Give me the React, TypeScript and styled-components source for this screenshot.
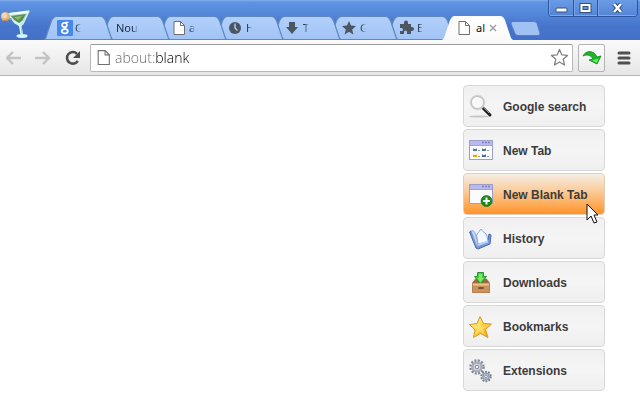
import React, { useState } from 'react';
import styled, { createGlobalStyle, css } from 'styled-components';

const GlobalStyle = createGlobalStyle`
  * { box-sizing: border-box; }
  body { margin: 0; background: #fff; font-family: "Liberation Sans", Arial, sans-serif; }
  button { font: inherit; border: 0; padding: 0; background: none; color: inherit; }
  svg { display: block; flex: none; }
`;

const Browser = styled.div`
  min-height: 100vh;
  display: flex;
  flex-direction: column;
`;

const TitleBar = styled.header`
  display: flex;
  align-items: flex-end;
  height: 40px;
  background: linear-gradient(#86b0ee 0, #5f93e2 2px, #578bdc 10px, #4775cc 26px, #4371c8 100%);
`;

const Logo = styled.div`
  flex: none;
  width: 43px;
  height: 30px;
`;

const TabStrip = styled.div`
  display: flex;
  align-items: flex-end;
  min-width: 0;
`;

const tabShape = css`
  clip-path: polygon(0 100%, 2px 22px, 8px 4px, 10px 1px, 12px 0, calc(100% - 12px) 0, calc(100% - 10px) 1px, calc(100% - 8px) 4px, calc(100% - 2px) 22px, 100% 100%);
`;

const TabButton = styled.button<{ $active?: boolean; $order: number }>`
  position: relative;
  z-index: ${p => p.$order};
  isolation: isolate;
  display: flex;
  align-items: center;
  gap: 2px;
  flex: 0 1 71px;
  width: 71px;
  height: 24px;
  padding: 0 ${p => (p.$active ? 16 : 32)}px 0 14px;
  background: ${p => (p.$active ? '#fafafa' : '#6088c0')};
  color: ${p => (p.$active ? '#111' : '#1c2c42')};
  font-family: "Noto Sans", "Open Sans", sans-serif;
  font-size: 11px;
  line-height: 16px;
  text-align: left;
  ${tabShape}
  & + & { margin-left: -14px; }
  &::before {
    content: "";
    position: absolute;
    z-index: -1;
    inset: 1px 1px ${p => (p.$active ? 0 : 1)}px;
    background: ${p => (p.$active ? 'linear-gradient(#fff, #fafafa)' : 'linear-gradient(#b1cffb, #a2c4f5)')};
    ${tabShape}
  }
`;

const TabLabel = styled.span<{ $inset?: boolean }>`
  flex: 1 1 0;
  min-width: 0;
  padding-left: ${p => (p.$inset ? 2 : 0)}px;
  overflow: hidden;
  white-space: nowrap;
  mask-image: linear-gradient(to left, transparent 1px, #000 6px);
`;

const ActiveLabel = styled(TabLabel)`
  mask-image: none;
`;

const NewTabButton = styled.button`
  flex: none;
  width: 31px;
  height: 15px;
  margin: 0 0 4px -3px;
`;

const WindowControls = styled.div`
  display: flex;
  align-self: flex-start;
  flex: none;
  height: 17px;
  margin: 0 2px 0 auto;
  border: 1px solid #2e56a0;
  border-top: 0;
  border-radius: 0 0 4px 4px;
  overflow: hidden;
`;

const WindowButton = styled.button<{ $wide?: boolean }>`
  display: grid;
  place-items: center;
  width: ${p => (p.$wide ? 40 : 24)}px;
  height: 16px;
  background: linear-gradient(#6a9be5, #5385d5);
  box-shadow: inset 0 -1px #80a8e8, inset 1px 0 #79a3e6;
  & + & { border-left: 1px solid #2e56a0; }
`;

const Toolbar = styled.div`
  display: flex;
  align-items: center;
  height: 36px;
  padding: 0 4px 0 0;
  background: linear-gradient(#fafafa, #e6e6e6);
  border-bottom: 1px solid #b5b5b5;
`;

const ToolButton = styled.button`
  display: grid;
  place-items: center;
  flex: none;
  width: 29px;
  height: 28px;
`;

const MenuButton = styled(ToolButton)`
  margin-left: 7px;
  width: 24px;
`;

const AddressBar = styled.form`
  display: flex;
  align-items: center;
  flex: 1 1 auto;
  min-width: 0;
  height: 28px;
  margin: 0 5px 0 3px;
  padding: 0 3px 0 4px;
  gap: 3px;
  background: #fff;
  border: 1px solid #b8b8b8;
  border-top-color: #999;
  border-radius: 2px;
`;

const AddressInput = styled.input`
  flex: 1 1 auto;
  min-width: 0;
  height: 24px;
  padding: 0;
  border: 0;
  outline: 0;
  font-family: "Open Sans", "Noto Sans", sans-serif;
  font-size: 14px;
  font-weight: 300;
  color: transparent;
  caret-color: #000;
  background: linear-gradient(to right, #666 40px, #000 40px);
  background-clip: text;
`;

const ExtensionButton = styled(ToolButton)`
  width: 27px;
  background: linear-gradient(#fdfdfd, #ececec);
  border: 1px solid #b4b4b4;
  border-radius: 2px;
`;

const Page = styled.main`
  display: flex;
  justify-content: flex-end;
  flex: 1;
  padding: 9px 35px 8px;
`;

const Shortcuts = styled.nav`
  display: flex;
  flex-direction: column;
  gap: 2px;
  width: 142px;
`;

const Shortcut = styled.a<{ $hot?: boolean }>`
  position: relative;
  display: flex;
  align-items: center;
  gap: 9px;
  height: 42px;
  padding: 2px 5px 0 4px;
  border: 1px solid ${p => (p.$hot ? '#e2ceb8' : '#d8d8d8')};
  border-radius: 4px;
  background: ${p => (p.$hot ? 'linear-gradient(#f6eee6, #fbc58c 50%, #ff9428)' : 'linear-gradient(#f0f0f0, #f5f5f5 50%, #efefef)')};
  color: #3c3c3c;
  font-size: 12px;
  font-weight: bold;
  line-height: 16px;
  text-decoration: none;
  white-space: nowrap;
`;

const Pointer = styled.svg`
  position: absolute;
  right: 5px;
  top: 29px;
  z-index: 2;
  pointer-events: none;
`;

const MartiniIcon = () => (
  <svg width="32" height="30" viewBox="0 0 32 30" aria-hidden="true">
    <path d="M8 4 29 1 23 14 20 16 15 13Z" fill="#b9ddd4" stroke="#c9f1f0" strokeWidth="1.400" strokeLinejoin="round" />
    <path d="M11 6 26 4 21 13 17 13Z" fill="#55935a" />
    <path d="M14 7 22 6 18 10Z" fill="#93bd5f" />
    <path d="M9 4 28 2" stroke="#f3fffc" strokeWidth="2" />
    <path d="M14 11 19 14 23 11" stroke="#d8f6f0" strokeWidth="1.500" fill="none" />
    <path d="M20 15 22 25" stroke="#d8f9fb" strokeWidth="2.600" />
    <path d="M21 17 22.500 25" stroke="#7fbcc9" strokeWidth=".8" />
    <ellipse cx="22" cy="26" rx="5.500" ry="1.900" fill="#d3f8f6" />
    <circle cx="5.500" cy="6.500" r="4.600" fill="#e0b585" />
    <circle cx="4.500" cy="5.500" r="2.800" fill="#f3d6af" />
    <path d="M2 11 12 9" stroke="#b98752" />
  </svg>
);

const GoogleIcon = () => (
  <svg width="16" height="16" viewBox="0 0 16 16" aria-hidden="true">
    <rect width="16" height="16" rx="1" fill="#4688ee" />
    <g fill="none" stroke="#fff">
      <ellipse cx="7.500" cy="5" rx="2.400" ry="2.200" strokeWidth="1.700" />
      <path d="M8 2.300h3.500" strokeWidth="1.200" />
      <path d="M9 7.200Q7.500 8.300 9 9.200" strokeWidth="1.500" />
      <ellipse cx="7.800" cy="11.300" rx="3" ry="2.100" strokeWidth="1.700" />
    </g>
  </svg>
);

const PageIcon = ({ size = 16 }: { size?: number }) => (
  <svg width={size} height={size} viewBox="0 0 16 16" aria-hidden="true">
    <path d="M3 1.500h6.500l4 4v9H3Z" fill="#fff" stroke="#6f6f6f" />
    <path d="M9.500 1.500v4h4" fill="none" stroke="#6f6f6f" />
  </svg>
);

const ClockIcon = () => (
  <svg width="16" height="16" viewBox="0 0 16 16" aria-hidden="true">
    <circle cx="7" cy="8" r="6" fill="#4b5661" />
    <path d="M7 3.500V8l2.500 2.500" fill="none" stroke="#b4cff6" strokeWidth="1.400" />
  </svg>
);

const ArrowIcon = () => (
  <svg width="16" height="16" viewBox="0 0 16 16" aria-hidden="true">
    <path d="M4 2h6v5h3l-6 7-6-7h3Z" fill="#4b5661" />
  </svg>
);

const StarIcon = () => (
  <svg width="16" height="16" viewBox="0 0 16 16" aria-hidden="true">
    <path d="m7 1 2 4.600 5 .5-3.800 3.300 1.200 5L7 11.800l-4.400 2.600 1.200-5L0 6.100l5-.5Z" fill="#4b5661" />
  </svg>
);

const PuzzleIcon = () => (
  <svg width="16" height="16" viewBox="0 0 16 16" aria-hidden="true">
    <path d="M1 4h4V2.500a2 2 0 0 1 4 0V4h3v3h1a2 2 0 0 1 0 4h-1v3H8v-2a1.500 1.500 0 0 0-3 0v2H1v-3h1.500a1.500 1.500 0 0 0 0-3H1Z" fill="#4b5661" />
  </svg>
);

const SearchIcon = () => (
  <svg width="26" height="26" viewBox="0 0 26 26" aria-hidden="true">
    <ellipse cx="11" cy="22.500" rx="10" ry="1" fill="#c6c6c6" />
    <path d="m15 14 7 7" stroke="#222" strokeWidth="3" strokeLinecap="round" />
    <path d="m15.500 13.500 5.500 5.500" stroke="#929292" strokeWidth="1" />
    <circle cx="9.500" cy="8.500" r="6.500" fill="#f6f8fa" stroke="#c6c6c6" strokeWidth="2" />
    <path d="M5.500 8a4 4 0 0 1 4-4" stroke="#fff" strokeWidth="2" fill="none" />
    <circle cx="9.500" cy="8.500" r="7.500" fill="none" stroke="#ddd" strokeWidth=".6" />
  </svg>
);

const WindowIcon = ({ blank }: { blank?: boolean }) => (
  <svg width="26" height="26" viewBox="0 0 26 26" aria-hidden="true">
    <rect x="1.500" y="2.500" width="23" height="19" fill="#fbfbff" stroke="#9aa0c8" />
    <path d="M2 3h22v4H2Z" fill="#bab9ee" />
    <path d="M2 7.500h22" stroke="#a2a0d4" />
    <path d="M14 4.500h9" stroke="#7f80bc" strokeWidth="1.500" strokeDasharray="2 1" />
    {blank ? (
      <>
        <circle cx="18.500" cy="19" r="5.500" fill="#168d16" stroke="#086b08" strokeWidth=".6" />
        <path d="M18.500 15.500v7M15 19h7" stroke="#fff" strokeWidth="2" />
      </>
    ) : (
      <>
        <path d="M5 10l1 1h2l1-1v3H5Z" fill="#5477a3" />
        <path d="M14 10l1 1h2l1-1v3h-4Z" fill="#487a76" />
        <path d="M5 16l1 1h2l1-1v3H5Z" fill="#e0ad00" />
        <path d="M14 16l1 1h2l1-1v3h-4Z" fill="#466ca6" />
        <path d="M10 12.500h2m7 0h2M10 18.500h2m7 0h2" stroke="#93a080" />
      </>
    )}
  </svg>
);

const HistoryIcon = () => (
  <svg width="26" height="26" viewBox="0 0 26 26" aria-hidden="true">
    <path d="M1.500 6 3 5l6 13 11-4 1-6 2 1-1 9-12 5-2-1Z" fill="#7597d6" stroke="#4869b0" strokeLinejoin="round" />
    <path d="M3 5c3-1 4 1 5 5l2 9-1 2Z" fill="#c3d6f5" stroke="#7b98d0" strokeWidth=".8" />
    <path d="M10 18 8.500 9 13 3c2 4 5 3 6 7l1 6Z" fill="#f4f8ff" stroke="#8ba8dc" />
    <path d="m10 19 10-3.500" stroke="#bad0f5" strokeWidth="2" />
  </svg>
);

const DownloadsIcon = () => (
  <svg width="26" height="26" viewBox="0 0 26 26" aria-hidden="true">
    <path d="m4.500 13 3-4h11l3 4Z" fill="#9b6539" stroke="#a77849" />
    <path d="M9.500 2.500h6v4h3l-6 7.500-6-7.500h3Z" fill="#4bc841" stroke="#239a31" />
    <path d="M11 4h3v4h2l-3.500 4L9 8h2Z" fill="#7bea69" />
    <path d="M4.500 13.500h17v9h-17Z" fill="#ca935d" stroke="#b67e4b" />
    <path d="M5 14.500h16" stroke="#efc18e" strokeWidth="2" />
    <rect x="10" y="17" width="6" height="2" rx="1" fill="#805030" />
  </svg>
);

const BookmarksIcon = () => (
  <svg width="26" height="26" viewBox="0 0 26 26" aria-hidden="true">
    <defs>
      <linearGradient id="gold" x1="0" y1="0" x2="1" y2="1">
        <stop stopColor="#fff6a8" />
        <stop offset=".5" stopColor="#ffd23c" />
        <stop offset="1" stopColor="#f59300" />
      </linearGradient>
    </defs>
    <path d="m12 2.500 3.500 7 8 .5-6 5.500 2.500 8-7.500-4-7 4L7 16 1.500 10.500l7.500-1Z" fill="url(#gold)" stroke="#dc9b28" strokeLinejoin="round" />
    <path d="m12 5 1 8 8-2-6.500 4.500 3 6-5-4.500L7 20l2.500-5L4 11l6 1Z" fill="#fff09a" opacity=".5" />
  </svg>
);

const ExtensionsIcon = () => (
  <svg width="26" height="26" viewBox="0 0 26 26" aria-hidden="true">
    <circle cx="9" cy="9" r="6.500" fill="none" stroke="#828897" strokeWidth="2.500" strokeDasharray="2 1.400" />
    <circle cx="9" cy="9" r="4.500" fill="#d8dbe6" stroke="#a8adbe" strokeWidth="2.500" />
    <circle cx="9" cy="9" r="1.800" fill="#f4f4f7" stroke="#7c8292" />
    <circle cx="18" cy="18.500" r="4.600" fill="none" stroke="#747b8c" strokeWidth="2.200" strokeDasharray="1.700 1.200" />
    <circle cx="18" cy="18.500" r="3.200" fill="#d0d4e1" stroke="#9ba1b4" strokeWidth="1.800" />
    <circle cx="18" cy="18.500" r="1.300" fill="#f4f4f7" stroke="#747b8c" strokeWidth=".8" />
  </svg>
);

const NavArrow = ({ forward }: { forward?: boolean }) => (
  <svg width="17" height="14" viewBox="0 0 17 14" aria-hidden="true">
    <path d={forward ? 'M0 7h14M8 1l6 6-6 6' : 'M15 7H1M7 1 1 7l6 6'} fill="none" stroke="#c3c3c3" strokeWidth="2.400" />
  </svg>
);

const tabs = [
  { title: 'G', icon: <GoogleIcon /> },
  { title: 'Nou', icon: null },
  { title: 'a', icon: <PageIcon /> },
  { title: 'H', icon: <ClockIcon /> },
  { title: 'T', icon: <ArrowIcon /> },
  { title: 'G', icon: <StarIcon /> },
  { title: 'E', icon: <PuzzleIcon /> },
];

const shortcuts = [
  { label: 'Google search', icon: <SearchIcon /> },
  { label: 'New Tab', icon: <WindowIcon /> },
  { label: 'New Blank Tab', icon: <WindowIcon blank />, hot: true },
  { label: 'History', icon: <HistoryIcon /> },
  { label: 'Downloads', icon: <DownloadsIcon /> },
  { label: 'Bookmarks', icon: <BookmarksIcon /> },
  { label: 'Extensions', icon: <ExtensionsIcon /> },
];

export default function App() {
  const [address, setAddress] = useState('about:blank');
  return (
    <Browser>
      <GlobalStyle />
      <TitleBar>
        <Logo><MartiniIcon /></Logo>
        <TabStrip role="tablist">
          {tabs.map((tab, i) => (
            <TabButton key={i} role="tab" aria-selected={false} $order={tabs.length - i}>
              {tab.icon}
              <TabLabel $inset={!tab.icon}>{tab.title}</TabLabel>
            </TabButton>
          ))}
          <TabButton role="tab" aria-selected $active $order={tabs.length + 1}>
            <PageIcon />
            <ActiveLabel $inset>al</ActiveLabel>
            <svg width="8" height="8" viewBox="0 0 8 8" aria-hidden="true">
              <path d="m1 1 6 6m0-6-6 6" stroke="#a3a3a3" strokeWidth="1.500" />
            </svg>
          </TabButton>
        </TabStrip>
        <NewTabButton aria-label="New tab">
          <svg width="31" height="15" viewBox="0 0 31 15">
            <path d="M3 .5h21q2 0 3 2l3 10q0 2-2 2H8q-2 0-3-2L1 3Q.5.500 3 .5Z" fill="#a0c2f3" stroke="#5080c8" />
          </svg>
        </NewTabButton>
        <WindowControls>
          <WindowButton aria-label="Minimize">
            <svg width="13" height="12" viewBox="0 0 13 12"><rect x="1" y="6" width="11" height="4" rx="1" fill="#fff" stroke="#34517f" /></svg>
          </WindowButton>
          <WindowButton aria-label="Maximize">
            <svg width="13" height="12" viewBox="0 0 13 12">
              <rect x="1" y="1.500" width="11" height="9" fill="#fff" stroke="#34517f" />
              <rect x="4" y="4.500" width="5" height="3" fill="#6595dd" stroke="#34517f" />
            </svg>
          </WindowButton>
          <WindowButton aria-label="Close" $wide>
            <svg width="13" height="12" viewBox="0 0 13 12">
              <path d="m3 2 7 8m0-8-7 8" stroke="#34517f" strokeWidth="4.500" />
              <path d="m3 2 7 8m0-8-7 8" stroke="#fff" strokeWidth="2.400" />
            </svg>
          </WindowButton>
        </WindowControls>
      </TitleBar>
      <Toolbar>
        <ToolButton aria-label="Back"><NavArrow /></ToolButton>
        <ToolButton aria-label="Forward"><NavArrow forward /></ToolButton>
        <ToolButton aria-label="Reload">
          <svg width="16" height="16" viewBox="0 0 16 16">
            <path d="M12.800 10.800A5.800 5.800 0 1 1 12 3.800" fill="none" stroke="#4c4c4c" strokeWidth="2.600" />
            <path d="M15 1v7H8Z" fill="#4c4c4c" />
          </svg>
        </ToolButton>
        <AddressBar onSubmit={e => e.preventDefault()}>
          <PageIcon size={17} />
          <AddressInput aria-label="Address" value={address} onChange={e => setAddress(e.target.value)} />
          <button type="button" aria-label="Bookmark this page">
            <svg width="19" height="19" viewBox="0 0 19 19">
              <path d="m9.500 1.500 2.300 5.300 5.700.6-4.300 3.800 1.300 5.800-5-3-5 3 1.300-5.800-4.300-3.800 5.700-.6Z" fill="#fff" stroke="#818181" strokeWidth="1.300" strokeLinejoin="round" />
            </svg>
          </button>
        </AddressBar>
        <ExtensionButton aria-label="New blank tab extension">
          <svg width="20" height="18" viewBox="0 0 20 18">
            <path d="M1 7C4 1 12 1 15 8l4-1-4 8-8-4 4-1C9 6 5 5 1 7Z" fill="#1fb52a" stroke="#168322" strokeWidth=".8" strokeLinejoin="round" />
            <path d="m10 11 6-1 1-1-2.500 5Z" fill="#50ff4c" />
          </svg>
        </ExtensionButton>
        <MenuButton aria-label="Menu">
          <svg width="14" height="14" viewBox="0 0 14 14">
            <path d="M2 2h10M2 7h10M2 12h10" stroke="#505050" strokeWidth="3" strokeLinecap="round" />
          </svg>
        </MenuButton>
      </Toolbar>
      <Page>
        <Shortcuts aria-label="Shortcuts">
          {shortcuts.map(item => (
            <Shortcut key={item.label} href="#" $hot={item.hot}>
              {item.icon}
              {item.label}
              {item.hot && (
                <Pointer width="13" height="22" viewBox="0 0 13 22" aria-hidden="true">
                  <path d="M1 1v16l4-4 3 7 3-1-3-7h4Z" fill="#fff" stroke="#111" />
                </Pointer>
              )}
            </Shortcut>
          ))}
        </Shortcuts>
      </Page>
    </Browser>
  );
}
